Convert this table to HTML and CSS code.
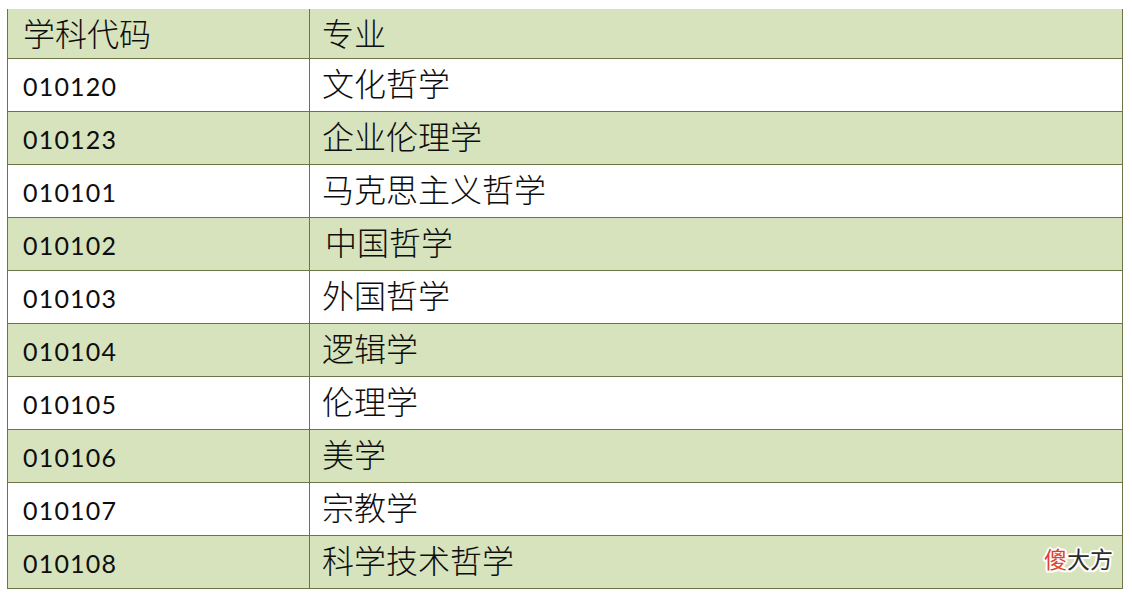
FILE: index.html
```html
<!DOCTYPE html>
<html lang="zh-CN">
<head>
<meta charset="utf-8">
<title>学科代码</title>
<link rel="stylesheet" href="styles.css">
</head>
<body>
<div class="wrap">
  <div class="table">
    <div class="row head green"><div class="c1 cjk">学科代码</div><div class="c2 cjk">专业</div></div>
    <div class="row white"><div class="c1 num">010120</div><div class="c2 cjk">文化哲学</div></div>
    <div class="row green"><div class="c1 num">010123</div><div class="c2 cjk">企业伦理学</div></div>
    <div class="row white"><div class="c1 num">010101</div><div class="c2 cjk">马克思主义哲学</div></div>
    <div class="row green"><div class="c1 num">010102</div><div class="c2 cjk shift">中国哲学</div></div>
    <div class="row white"><div class="c1 num">010103</div><div class="c2 cjk">外国哲学</div></div>
    <div class="row green"><div class="c1 num">010104</div><div class="c2 cjk">逻辑学</div></div>
    <div class="row white"><div class="c1 num">010105</div><div class="c2 cjk">伦理学</div></div>
    <div class="row green"><div class="c1 num">010106</div><div class="c2 cjk">美学</div></div>
    <div class="row white"><div class="c1 num">010107</div><div class="c2 cjk">宗教学</div></div>
    <div class="row green"><div class="c1 num">010108</div><div class="c2 cjk">科学技术哲学</div></div>
  </div>
  <div class="mark"><span class="red">傻</span>大方</div>
</div>
</body>
</html>
```
FILE: styles.css
```css
html, body {
  margin: 0;
  padding: 0;
  background: #ffffff;
}
.wrap {
  position: relative;
  width: 1132px;
  height: 598px;
  padding: 9px 0 0 7px;
  box-sizing: border-box;
}
.table {
  width: 1116px;
  border-left: 1px solid #6b7548;
  border-right: 1px solid #6b7548;
  border-bottom: 1px solid #6b7548;
  box-sizing: border-box;
}
.row {
  display: grid;
  grid-template-columns: 302px 1fr;
  height: 53px;
  border-top: 1px solid #6b7548;
  box-sizing: border-box;
}
.row.head {
  height: 49px;
  border-top: none;
}
.green { background: #d7e3bd; }
.white { background: #ffffff; }
.c1, .c2 {
  display: flex;
  align-items: center;
  color: #0d0d0d;
}
.c1 {
  border-right: 1px solid #6b7548;
  padding-left: 15px;
}
.c2 {
  padding-left: 12px;
}
.num {
  font-family: Lato, "Open Sans", "Liberation Sans", sans-serif;
  font-size: 25px;
  letter-spacing: 1.2px;
  padding-top: 2px;
}
.cjk {
  font-family: "Noto Sans CJK SC", "Noto Sans", sans-serif;
  font-size: 32px;
  font-weight: 300;
  padding-bottom: 6px;
}
.head .cjk {
  padding-bottom: 8px;
}
.shift {
  padding-left: 15px;
}
.mark {
  position: absolute;
  right: 19px;
  bottom: 23px;
  font-family: "Noto Sans CJK SC", sans-serif;
  font-size: 23px;
  font-weight: 400;
  color: #2b2b2b;
  text-shadow: 2px 0 0 #fff, -2px 0 0 #fff, 0 2px 0 #fff, 0 -2px 0 #fff,
               1.5px 1.5px 0 #fff, -1.5px 1.5px 0 #fff, 1.5px -1.5px 0 #fff, -1.5px -1.5px 0 #fff;
}
.red { color: #e0412f; }
```
